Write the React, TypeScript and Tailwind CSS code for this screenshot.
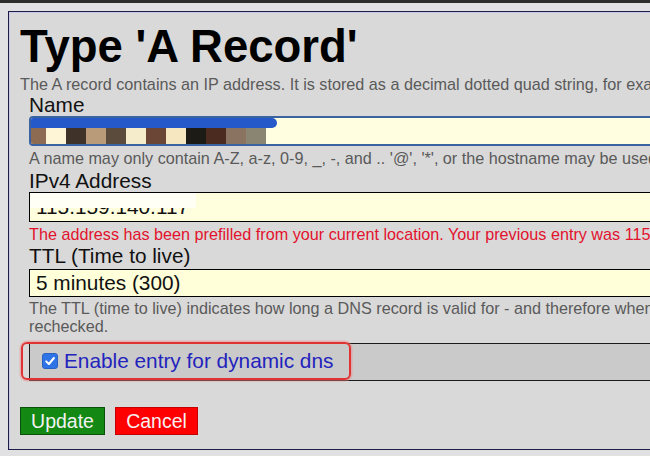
import React from "react";

const blocks = [
  { w: 15, c: "#8c6b52" },
  { w: 20, c: "#fdf5d6" },
  { w: 20, c: "#3f3329" },
  { w: 20, c: "#b99b7a" },
  { w: 20, c: "#5b4b3d" },
  { w: 20, c: "#f4eccb" },
  { w: 20, c: "#6b4535" },
  { w: 20, c: "#f6e7c0" },
  { w: 20, c: "#1d1b15" },
  { w: 20, c: "#4b2b1f" },
  { w: 20, c: "#8b7361" },
  { w: 20, c: "#8a8572" },
];

export default function App() {
  return (
    <div className="w-[650px] h-[456px] overflow-hidden bg-[#e1e1e4] font-['Liberation_Sans',Arial,sans-serif]">
      <div className="h-[3px] bg-[#2d2d2d]" />
      <div className="pt-[8px] pl-[8px]">
        <div className="relative w-[1100px] h-[439px] border-t border-l border-b border-[#1d1d48] bg-[#d9d9d9] pl-[11px] shadow-[inset_1px_1px_0_#c9c9e6]">
          <h1 className="mt-[9px] text-[45.5px] leading-[52px] font-bold text-black whitespace-nowrap">
            Type 'A Record'
          </h1>
          <p className="mt-[2px] text-[16.2px] leading-[18px] text-[#5a5a5a] whitespace-nowrap">
            The A record contains an IP address. It is stored as a decimal dotted quad string, for example '192.168.0.1'.
          </p>

          <div className="ml-[9px] w-[900px]">
            <div className="mt-[1px] text-[20.8px] leading-[22px] text-[#111]">Name</div>
            <div className="h-[30px] border-2 border-[#3a63a0] rounded-[4px] bg-[#fffee0] overflow-hidden flex flex-col">
              <div className="h-[10px] w-[246px] rounded-r-[5px] bg-[#2558c8]" />
              <div className="flex h-[16px]">
                {blocks.map((b, i) => (
                  <div key={i} className="h-full" style={{ width: b.w, background: b.c }} />
                ))}
              </div>
            </div>
            <p className="mt-[3px] text-[16.2px] leading-[18px] text-[#5a5a5a] whitespace-nowrap">
              A name may only contain A-Z, a-z, 0-9, _, -, and .. '@', '*', or the hostname may be used.
            </p>

            <div className="mt-[3px] text-[20.8px] leading-[22px] text-[#111]">IPv4 Address</div>
            <div className="relative h-[30px] border border-black bg-[#ffffde] pl-[6px] text-[20.8px] leading-[28px] text-[#111]">
              115.159.140.117
              <div className="absolute left-0 top-0 w-[166px] h-[15px] bg-[#fffff6]" />
            </div>
            <p className="mt-[3px] text-[16.2px] leading-[18px] text-[#e3122d] whitespace-nowrap">
              The address has been prefilled from your current location. Your previous entry was 115.159.140.117
            </p>

            <div className="mt-[2px] text-[20.8px] leading-[22px] text-[#111]">TTL (Time to live)</div>
            <div className="mt-[2px] h-[28px] border border-black bg-[#ffffd9] pl-[6px] text-[20.8px] leading-[26px] text-[#111]">
              5 minutes (300)
            </div>
            <p className="mt-[2px] text-[16.2px] leading-[18px] text-[#5a5a5a] whitespace-nowrap">
              The TTL (time to live) indicates how long a DNS record is valid for - and therefore when it will be
              <br />
              rechecked.
            </p>

            <div className="mt-[8px] h-[38px] border-t border-b border-l border-[#1a1a1a] bg-[#cacaca] pl-[12px] pb-[3px] flex items-center gap-[6px]">
              <div className="w-[16px] h-[16px] rounded-[3px] bg-[#2f74e6] border border-[#2a62c4] flex items-center justify-center">
                <svg width="12" height="12" viewBox="0 0 12 12">
                  <path d="M2.2 6.4 L4.9 9 L9.9 3" fill="none" stroke="white" strokeWidth="2" strokeLinecap="round" strokeLinejoin="round" />
                </svg>
              </div>
              <span className="text-[20.8px] leading-[22px] text-[#2323bd] whitespace-nowrap">
                Enable entry for dynamic dns
              </span>
            </div>
          </div>

          <div className="mt-[26px] flex gap-[10px]">
            <button className="h-[28px] w-[85px] bg-[#138913] border border-[#0b500b] text-[#f2f2f2] text-[19.5px] leading-[26px] text-center">
              Update
            </button>
            <button className="h-[28px] w-[83px] bg-[#ff0000] border border-[#c40000] text-[#f7f0f0] text-[19.5px] leading-[26px] text-center">
              Cancel
            </button>
          </div>

          <div className="absolute left-[12px] top-[330px] w-[330px] h-[38px] rounded-[6px] border-[2.5px] border-[#e03434] shadow-[0_0_0_1.5px_rgba(240,130,130,0.45)] pointer-events-none" />
        </div>
      </div>
    </div>
  );
}
